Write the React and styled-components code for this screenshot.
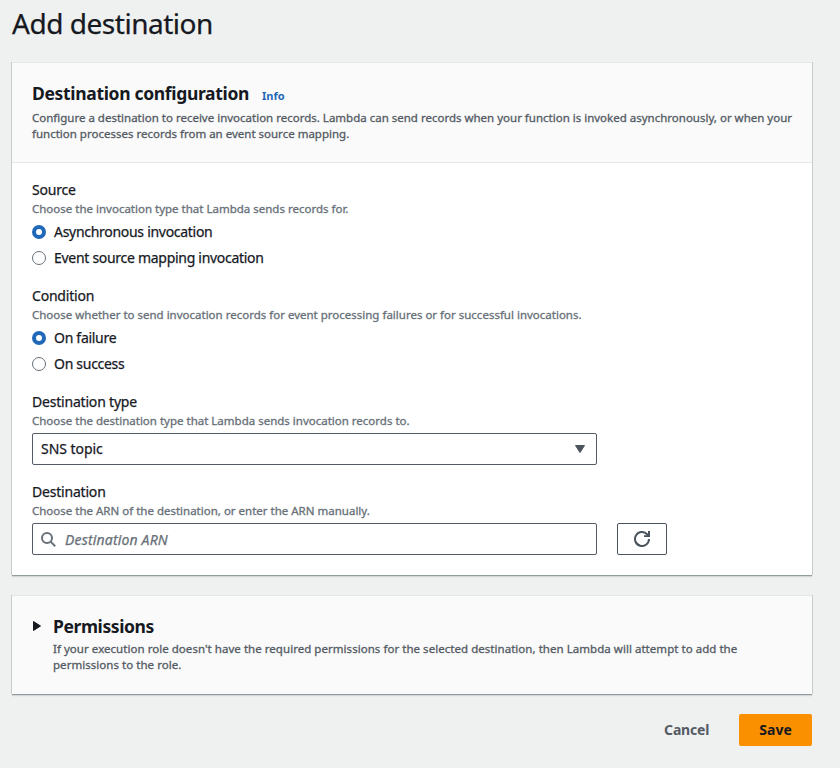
import React from 'react';
import styled, { createGlobalStyle } from 'styled-components';

const GlobalStyle = createGlobalStyle`
  *, *::before, *::after { box-sizing: border-box; }
  body {
    margin: 0;
    background: #eff1f1;
    color: #16191f;
    font-family: "Noto Sans", "Open Sans", sans-serif;
    font-size: 14px;
  }
  button, input { font: inherit; color: inherit; }
`;

const Page = styled.main`
  display: flex;
  flex-direction: column;
  min-height: 768px;
  padding: 5px 28px 0 12px;
`;

const PageTitle = styled.h1`
  margin: 0 0 21px;
  font-size: 28px;
  font-weight: 400;
  line-height: 36px;
  letter-spacing: -0.47px;
  -webkit-text-stroke: 0.25px currentColor;
`;

const Panel = styled.section`
  margin-bottom: 20px;
  background: #fff;
  border-top: 1px solid #e4e8e8;
  box-shadow: 0 1px 0 #8f9b9c, 1px 0 0 #c6cccd, -1px 0 0 #c6cccd,
    0 2px 1px rgba(0, 28, 36, 0.12);
`;

const PanelHeader = styled.header`
  height: 100px;
  padding: 19px 20px 0;
  background: #fafafa;
  border-bottom: 1px solid #e4e8e8;
`;

const HeadingLine = styled.div`
  display: flex;
  align-items: baseline;
  gap: 13px;
  height: 22px;
`;

const Heading = styled.h2`
  margin: 0;
  font-size: 17.5px;
  font-weight: 700;
  line-height: 22px;
  letter-spacing: ${p => p.$spacing}px;
`;

const InfoLink = styled.a`
  color: #2268b8;
  font-size: 11px;
  font-weight: 700;
  line-height: 16px;
  text-decoration: none;
`;

const Description = styled.p`
  margin: ${p => p.$gap}px 0 0;
  color: #545b64;
  font-size: 11.5px;
  line-height: 16px;
  letter-spacing: ${p => p.$spacing}px;
  white-space: nowrap;
  -webkit-text-stroke: 0.3px currentColor;
`;

const PanelBody = styled.div`
  display: flex;
  flex-direction: column;
  gap: 16px;
  padding: 16px 20px 20px;
`;

const Field = styled.div`
  display: flex;
  flex-direction: column;
`;

const FieldLabel = styled.div`
  line-height: 21px;
  letter-spacing: -0.2px;
  -webkit-text-stroke: 0.25px currentColor;
`;

const Hint = styled.div`
  margin: 1px 0 4px;
  color: #687078;
  font-size: 11.5px;
  line-height: 16px;
  -webkit-text-stroke: 0.3px currentColor;
`;

const RadioList = styled.div`
  display: flex;
  flex-direction: column;
  gap: 4px;
`;

const RadioRow = styled.label`
  display: flex;
  align-items: center;
  gap: 8px;
  height: 22px;
  line-height: 22px;
  letter-spacing: -0.29px;
  -webkit-text-stroke: 0.25px currentColor;
`;

const RadioDot = styled.span`
  width: 14px;
  height: 14px;
  border: ${p => (p.$on ? '4px solid #2268b8' : '1px solid #687078')};
  border-radius: 50%;
  background: #fff;
`;

const ControlRow = styled.div`
  display: flex;
  gap: 20px;
`;

const Control = styled.div`
  display: flex;
  align-items: center;
  width: 565px;
  height: 32px;
  padding: 0 11px 0 8px;
  background: #fff;
  border: 1px solid #545b64;
  border-radius: 2px;
`;

const SelectValue = styled.span`
  flex: 1;
  padding-bottom: 2px;
  letter-spacing: -0.05px;
  -webkit-text-stroke: 0.25px currentColor;
`;

const SearchInput = styled.input`
  flex: 1;
  margin-left: 9px;
  padding: 1px 0 0;
  border: 0;
  outline: 0;
  background: none;
  letter-spacing: 0.17px;
  &::placeholder {
    color: #687078;
    opacity: 1;
    font-style: italic;
    -webkit-text-stroke: 0.25px #687078;
  }
`;

const IconButton = styled.button`
  display: flex;
  align-items: center;
  justify-content: center;
  width: 50px;
  height: 32px;
  padding: 0;
  color: #4b535d;
  background: #fff;
  border: 1px solid currentColor;
  border-radius: 2px;
`;

const Expander = styled.div`
  display: flex;
  height: 98px;
  padding: 19px 20px 0;
  background: #fafafa;
`;

const ExpandIcon = styled.svg`
  flex: none;
  width: 21px;
  height: 22px;
`;

const Actions = styled.footer`
  display: flex;
  justify-content: flex-end;
  gap: 10px;
`;

const Button = styled.button`
  height: 32px;
  padding: 0 20px 2px;
  border: 0;
  border-radius: 2px;
  background: ${p => (p.$primary ? '#fa8f00' : 'transparent')};
  color: ${p => (p.$primary ? '#16191f' : '#545b64')};
  font-weight: 700;
  letter-spacing: ${p => (p.$primary ? 0.1 : -0.2)}px;
`;

function RadioGroup({ options, selected }) {
  return (
    <RadioList role="radiogroup">
      {options.map(text => (
        <RadioRow key={text}>
          <RadioDot $on={text === selected} />
          {text}
        </RadioRow>
      ))}
    </RadioList>
  );
}

function FormField({ label, hint, children }) {
  return (
    <Field>
      <FieldLabel>{label}</FieldLabel>
      <Hint>{hint}</Hint>
      {children}
    </Field>
  );
}

export default function App() {
  return (
    <>
      <GlobalStyle />
      <Page>
        <PageTitle>Add destination</PageTitle>

        <Panel>
          <PanelHeader>
            <HeadingLine>
              <Heading $spacing={-0.33}>Destination configuration</Heading>
              <InfoLink href="#">Info</InfoLink>
            </HeadingLine>
            <Description $gap={6} $spacing={0}>
              Configure a destination to receive invocation records. Lambda can send records when your function is invoked asynchronously, or when your
              <br />
              function processes records from an event source mapping.
            </Description>
          </PanelHeader>
          <PanelBody>
            <FormField label="Source" hint="Choose the invocation type that Lambda sends records for.">
              <RadioGroup
                options={['Asynchronous invocation', 'Event source mapping invocation']}
                selected="Asynchronous invocation"
              />
            </FormField>
            <FormField
              label="Condition"
              hint="Choose whether to send invocation records for event processing failures or for successful invocations."
            >
              <RadioGroup options={['On failure', 'On success']} selected="On failure" />
            </FormField>
            <FormField
              label="Destination type"
              hint="Choose the destination type that Lambda sends invocation records to."
            >
              <Control>
                <SelectValue>SNS topic</SelectValue>
                <svg width="10" height="8" viewBox="0 0 10 8" fill="#4b535d" stroke="#4b535d" strokeLinejoin="round">
                  <path d="M.5.5h9L5 7.5z" />
                </svg>
              </Control>
            </FormField>
            <FormField
              label="Destination"
              hint="Choose the ARN of the destination, or enter the ARN manually."
            >
              <ControlRow>
                <Control>
                  <svg width="15" height="15" viewBox="0 0 15 15" fill="none" stroke="#687078" strokeWidth="2">
                    <circle cx="6" cy="6" r="5" />
                    <path d="M9.6 9.6l4.6 4.6" />
                  </svg>
                  <SearchInput placeholder="Destination ARN" />
                </Control>
                <IconButton aria-label="Refresh">
                  <svg width="16" height="16" viewBox="0 0 16 16" fill="none" stroke="currentColor" strokeWidth="2">
                    <path d="M15 8a7 7 0 1 1-2.2-5.1L14 4.2" />
                    <path d="M16 0v6h-6V4.2h2.6L14 2.8V0z" fill="currentColor" stroke="none" />
                  </svg>
                </IconButton>
              </ControlRow>
            </FormField>
          </PanelBody>
        </Panel>

        <Panel>
          <Expander>
            <ExpandIcon viewBox="0 0 21 22" fill="#16191f" stroke="#16191f" strokeLinejoin="round">
              <path d="M1.5 6.5v9L8.5 11z" />
            </ExpandIcon>
            <div>
              <Heading $spacing={-0.4}>Permissions</Heading>
              <Description $gap={4} $spacing={0.04}>
                If your execution role doesn't have the required permissions for the selected destination, then Lambda will attempt to add the
                <br />
                permissions to the role.
              </Description>
            </div>
          </Expander>
        </Panel>

        <Actions>
          <Button>Cancel</Button>
          <Button $primary>Save</Button>
        </Actions>
      </Page>
    </>
  );
}
